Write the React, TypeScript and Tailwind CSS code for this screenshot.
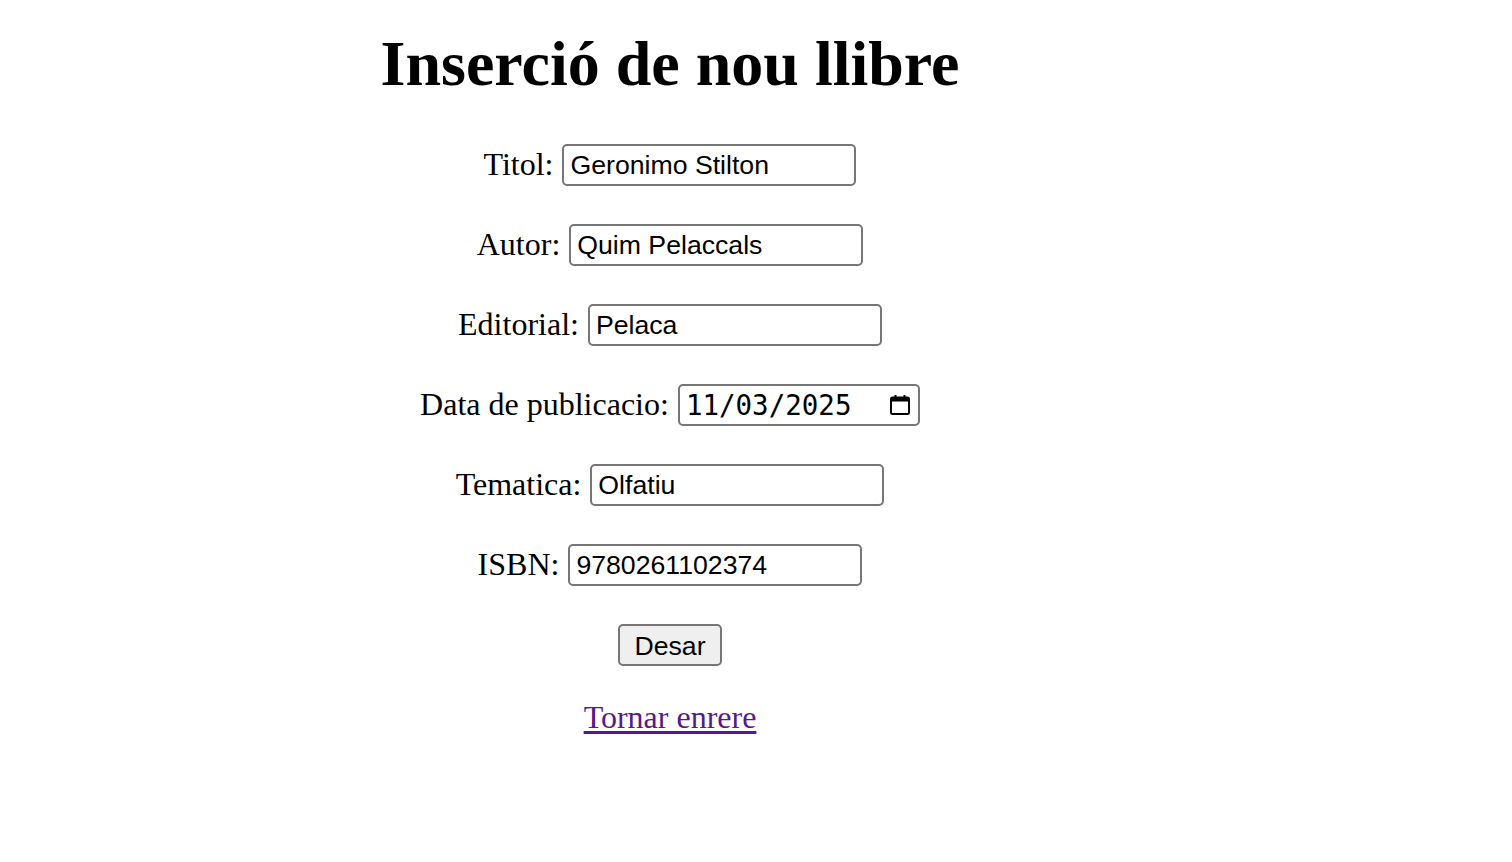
import { FC } from 'react';

const serif = { fontFamily: '"Liberation Serif", "Times New Roman", serif' };
const sans = { fontFamily: '"Liberation Sans", Arial, sans-serif' };
const mono = { fontFamily: '"DejaVu Sans Mono", "Liberation Mono", monospace' };

interface FieldProps {
  label: string;
  value: string;
}

const Field: FC<FieldProps> = ({ label, value }) => (
  <div className="flex h-[42px] items-center justify-center gap-[9px]">
    <label className="pb-[3px] text-[32px] leading-none text-black" style={serif}>
      {label}
    </label>
    <input
      type="text"
      defaultValue={value}
      className="h-[42px] w-[294px] rounded-[5px] border-2 border-[#767676] bg-white px-[6px] text-[26.67px] text-black outline-none"
      style={sans}
    />
  </div>
);

const CalendarIcon: FC = () => (
  <svg width="22" height="22" viewBox="0 0 22 22" fill="none">
    <rect x="2" y="3.5" width="18" height="16.5" rx="1.5" stroke="#000" strokeWidth="2" />
    <rect x="2" y="3.5" width="18" height="4" fill="#000" />
    <rect x="5.5" y="1" width="2" height="4" fill="#000" />
    <rect x="14.5" y="1" width="2" height="4" fill="#000" />
  </svg>
);

export default function App() {
  return (
    <div className="min-h-[862px] w-full bg-white">
      <div className="flex w-[1340px] flex-col items-center">
        <h1 className="mt-[32px] text-[64px] font-bold leading-none text-black" style={serif}>
          Inserció de nou llibre
        </h1>

        <form className="mt-[48px] flex flex-col gap-[38px]">
          <Field label="Titol:" value="Geronimo Stilton" />
          <Field label="Autor:" value="Quim Pelaccals" />
          <Field label="Editorial:" value="Pelaca" />

          <div className="flex h-[42px] items-center justify-center gap-[9px]">
            <label className="pb-[3px] text-[32px] leading-none text-black" style={serif}>
              Data de publicacio:
            </label>
            <div className="flex h-[42px] w-[242px] items-center justify-between rounded-[5px] border-2 border-[#767676] bg-white pl-[6px] pr-[7px]">
              <span className="pt-[2px] text-[27.5px] leading-none text-black" style={mono}>
                11/03/2025
              </span>
              <CalendarIcon />
            </div>
          </div>

          <Field label="Tematica:" value="Olfatiu" />
          <Field label="ISBN:" value="9780261102374" />

          <div className="flex h-[42px] justify-center">
            <button
              type="button"
              className="h-[42px] w-[104px] rounded-[5px] border-2 border-[#767676] bg-[#efefef] text-[26.67px] text-black"
              style={sans}
            >
              Desar
            </button>
          </div>
        </form>

        <a
          href="#"
          className="mt-[35px] text-[32px] leading-none text-[#551a8b] underline underline-offset-[3px]"
          style={serif}
        >
          Tornar enrere
        </a>
      </div>
    </div>
  );
}
